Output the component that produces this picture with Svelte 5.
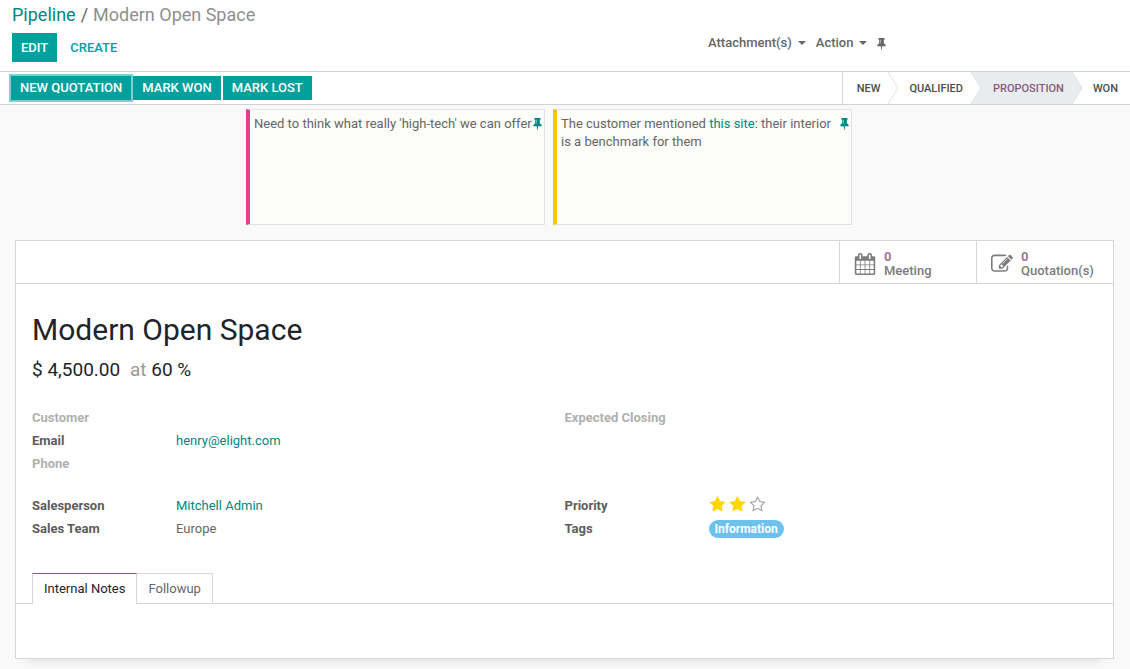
<script>
  const paths = {
    pin: 'M800 864v-448q0-14-9-23t-23-9-23 9-9 23v448q0 14 9 23t23 9 23-9 9-23zm672 352q0 26-19 45t-45 19h-429l-51 483q-2 12-10.5 20.5t-20.5 8.5h-1q-27 0-32-27l-76-485h-404q-26 0-45-19t-19-45q0-123 78.5-221.5t177.5-98.5v-512q-52 0-90-38t-38-90 38-90 90-38h640q52 0 90 38t38 90-38 90-90 38v512q99 0 177.5 98.5t78.5 221.5z',
    calendar: 'M192 1664h288v-288h-288v288zm352 0h320v-288h-320v288zm-352-352h288v-320h-288v320zm352 0h320v-320h-320v320zm-352-384h288v-288h-288v288zm736 736h320v-288h-320v288zm-384-736h320v-288h-320v288zm768 736h288v-288h-288v288zm-384-352h320v-320h-320v320zm-352-864v-288q0-13-9.5-22.5t-22.5-9.5h-64q-13 0-22.5 9.5t-9.5 22.5v288q0 13 9.5 22.5t22.5 9.5h64q13 0 22.5-9.5t9.5-22.5zm736 864h288v-320h-288v320zm-384-384h320v-288h-320v288zm384 0h288v-288h-288v288zm32-480v-288q0-13-9.5-22.5t-22.5-9.5h-64q-13 0-22.5 9.5t-9.5 22.5v288q0 13 9.5 22.5t22.5 9.5h64q13 0 22.5-9.5t9.5-22.5zm384-64v1280q0 52-38 90t-90 38h-1408q-52 0-90-38t-38-90v-1280q0-52 38-90t90-38h128v-96q0-66 47-113t113-47h64q66 0 113 47t47 113v96h384v-96q0-66 47-113t113-47h64q66 0 113 47t47 113v96h128q52 0 90 38t38 90z',
    edit: 'M888 1184l116-116-152-152-116 116v56h96v96h56zm440-720q-16-16-33 1l-350 350q-17 17-1 33t33-1l350-350q17-17 1-33zm80 594v190q0 119-84.5 203.5t-203.5 84.5h-832q-119 0-203.5-84.5t-84.5-203.5v-832q0-119 84.5-203.5t203.5-84.5h832q63 0 117 25 15 7 18 23 3 17-9 29l-49 49q-14 14-32 8-23-6-45-6h-832q-66 0-113 47t-47 113v832q0 66 47 113t113 47h832q66 0 113-47t47-113v-126q0-13 9-22l64-64q15-15 35-7t20 29zm-96-738l288 288-672 672h-288v-288zm444 132l-92 92-288-288 92-92q28-28 68-28t68 28l152 152q28 28 28 68t-28 68z',
    star: 'M1728 647q0 22-26 48l-363 354 86 500q1 7 1 20 0 21-10.5 35.5t-30.5 14.5q-19 0-40-12l-449-236-449 236q-22 12-40 12-21 0-31.5-14.5t-10.5-35.5q0-6 2-20l86-500-364-354q-25-27-25-48 0-37 56-46l502-73 225-455q19-41 49-41t49 41l225 455 502 73q56 9 56 46z',
    starEmpty: 'M1201 1004l306-297-422-62-189-382-189 382-422 62 306 297-73 421 378-199 377 199zm527-357q0 22-26 48l-363 354 86 500q1 7 1 20 0 50-41 50-19 0-40-12l-449-236-449 236q-22 12-40 12-21 0-31.5-14.5t-10.5-35.5q0-6 2-20l86-500-364-354q-25-27-25-48 0-37 56-46l502-73 225-455q19-41 49-41t49 41l225 455 502 73q56 9 56 46z'
  };
  const stages = ['New', 'Qualified', 'Proposition', 'Won'];
  let stage = $state('Proposition');
  let priority = $state(2);
  let tab = $state('Internal Notes');
</script>

{#snippet icon(name)}
  <svg class="icon" viewBox="0 0 1792 1792" aria-hidden="true"><path d={paths[name]} /></svg>
{/snippet}

{#snippet pin()}
  <svg class="icon tack" viewBox="320 0 1152 1792" aria-hidden="true"><path d={paths.pin} /></svg>
{/snippet}

<header class="panel">
  <nav class="crumbs" aria-label="Breadcrumb">
    <a href="#pipeline">Pipeline</a><span class="slash">/</span><span class="current">Modern Open Space</span>
  </nav>
  <div class="tools">
    <div class="left">
      <button class="btn primary">Edit</button>
      <button class="btn flat">Create</button>
    </div>
    <div class="right">
      <button class="drop">Attachment(s)<i class="caret"></i></button>
      <button class="drop">Action<i class="caret"></i></button>
      <button class="pin" aria-label="Pin">{@render pin()}</button>
    </div>
  </div>
</header>

<div class="statusbar">
  <div class="actions">
    <button class="btn primary focused">New Quotation</button>
    <button class="btn primary">Mark Won</button>
    <button class="btn primary">Mark Lost</button>
  </div>
  <div class="stages">
    {#each stages as s, i}
      <button class="stage" class:active={stage === s} onclick={() => (stage = s)}>{s}</button>
      {#if i < stages.length - 1}
        <svg
          class="sep"
          class:before={stages[i + 1] === stage}
          class:after={s === stage}
          viewBox="0 0 11 32"
          preserveAspectRatio="none"
          aria-hidden="true"
        >
          <path class="rest" d="M0 0H11V32H0L10 16Z" />
          <path class="lead" d="M0 0L10 16L0 32Z" />
          <path class="edge" d="M0 0L10 16L0 32" />
        </svg>
      {/if}
    {/each}
  </div>
</div>

<main>
  <section class="notes">
    <article class="note pink">
      <p>Need to think what really 'high-tech' we can offer</p>
      <button class="pin" aria-label="Unpin note">{@render pin()}</button>
    </article>
    <article class="note amber">
      <p>The customer mentioned <a href="#site">this site</a>: their interior is a benchmark for them</p>
      <button class="pin" aria-label="Unpin note">{@render pin()}</button>
    </article>
  </section>

  <section class="sheet">
    <div class="stats">
      <button class="stat">{@render icon('calendar')}<span><b>0</b>Meeting</span></button>
      <button class="stat">{@render icon('edit')}<span><b>0</b>Quotation(s)</span></button>
    </div>

    <div class="title">
      <h1>Modern Open Space</h1>
      <h2>$ 4,500.00 <span>at</span> 60 %</h2>
    </div>

    <div class="groups">
      <dl>
        <dt class="empty">Customer</dt><dd></dd>
        <dt>Email</dt><dd><a href="mailto:henry@elight.com">henry@elight.com</a></dd>
        <dt class="empty">Phone</dt><dd></dd>
      </dl>
      <dl>
        <dt class="empty">Expected Closing</dt><dd></dd>
      </dl>
      <dl>
        <dt>Salesperson</dt><dd><a href="#user">Mitchell Admin</a></dd>
        <dt>Sales Team</dt><dd>Europe</dd>
      </dl>
      <dl>
        <dt>Priority</dt>
        <dd class="stars">
          {#each [1, 2, 3] as n}
            <button class:on={n <= priority} aria-label="Priority {n}" onclick={() => (priority = n)}>
              {@render icon(n <= priority ? 'star' : 'starEmpty')}
            </button>
          {/each}
        </dd>
        <dt>Tags</dt><dd><span class="tag">Information</span></dd>
      </dl>
    </div>

    <div class="tabs" role="tablist">
      {#each ['Internal Notes', 'Followup'] as t}
        <button role="tab" aria-selected={tab === t} class:active={tab === t} onclick={() => (tab = t)}>{t}</button>
      {/each}
    </div>
    <div class="tabpane" role="tabpanel"></div>
  </section>
</main>

<style>
  :global(body) {
    margin: 0;
    background: #f9f9f9;
    color: #666;
    font: 13px/18px Roboto, "Noto Sans", sans-serif;
  }
  a {
    color: #008784;
    text-decoration: none;
  }
  button {
    font: inherit;
    color: inherit;
    border: 0;
    margin: 0;
    padding: 0;
    background: none;
    cursor: pointer;
  }
  .icon {
    display: block;
    width: 13px;
    height: 13px;
    fill: currentColor;
  }
  .tack {
    width: 9px;
  }

  .panel {
    background: #fff;
    border-bottom: 1px solid #ced4da;
    padding: 4px 12px 9px;
  }
  .crumbs {
    font-size: 18px;
    line-height: 22px;
  }
  .slash {
    padding: 0 5px;
  }
  .current {
    color: #8f8f8f;
  }
  .tools {
    display: flex;
    padding-top: 7px;
  }
  .left,
  .right {
    flex: 1;
    display: flex;
    align-items: flex-start;
  }
  .left {
    flex: 0 0 calc(50% + 143px);
    gap: 4px;
  }
  .btn {
    font-weight: 500;
    text-transform: uppercase;
    white-space: nowrap;
    padding: 0 9px;
    height: 29px;
  }
  .primary {
    background: #00a09d;
    color: #fff;
  }
  .flat {
    color: #00a09d;
  }
  .right {
    font-weight: 500;
  }
  .drop {
    display: flex;
    align-items: center;
    gap: 6px;
    height: 20px;
    margin-right: 10px;
  }
  .caret {
    border: 4px solid transparent;
    border-top-color: currentColor;
    border-bottom: 0;
  }
  .right .pin {
    height: 20px;
  }

  .statusbar {
    display: flex;
    justify-content: space-between;
    background: #fff;
    border-bottom: 1px solid #ced4da;
    height: 32px;
  }
  .actions {
    display: flex;
    align-items: center;
    gap: 2px;
    padding-left: 11px;
  }
  .actions .btn {
    height: 24px;
  }
  .focused {
    box-shadow: 0 0 0 2px #7fcfce;
  }
  .stages {
    display: flex;
    border-left: 1px solid #ced4da;
  }
  .stage {
    font-size: 11px;
    font-weight: 500;
    text-transform: uppercase;
    color: #4c4c4c;
    padding: 2px 12px 0 10px;
  }
  .stage:first-child {
    padding: 2px 8px 0 14px;
  }
  .stage.active {
    background: #e9ecef;
    color: #875a7b;
    padding: 2px 8px 0 11px;
  }
  .stage:nth-of-type(2) {
    padding-right: 8px;
  }
  .sep {
    width: 11px;
    height: 32px;
  }
  .sep path {
    fill: none;
  }
  .sep .edge {
    stroke: #dee2e6;
  }
  .sep.before .rest,
  .sep.after .lead {
    fill: #e9ecef;
  }

  main {
    padding: 4px 16px 10px 15px;
  }
  .notes {
    display: flex;
    justify-content: center;
    gap: 8px;
    padding-right: 31px;
    margin-bottom: 15px;
  }
  .note {
    box-sizing: border-box;
    width: 299px;
    min-height: 116px;
    display: flex;
    align-items: flex-start;
    justify-content: space-between;
    padding: 5px 2px 6px 4px;
    background: #fcfdf8;
    border: 1px solid #dee2e6;
    border-left-width: 4px;
  }
  .note p {
    margin: 0;
  }
  .note .pin {
    color: #008784;
    padding: 2px 0;
  }
  .pink {
    border-left-color: #e83e8c;
  }
  .amber {
    border-left-color: #ffc107;
  }

  .sheet {
    background: #fff;
    border: 1px solid #d3d8de;
    box-shadow: 0 12px 10px -12px rgba(0, 0, 0, 0.15);
  }
  .stats {
    display: flex;
    justify-content: flex-end;
    height: 42px;
    border-bottom: 1px solid #d3d8de;
  }
  .stat {
    box-sizing: border-box;
    width: 137px;
    display: flex;
    align-items: center;
    gap: 8px;
    padding: 3px 0 0 14px;
    border-left: 1px solid #d3d8de;
    font-weight: 500;
    line-height: 14px;
    text-align: left;
    color: #7c7c7c;
  }
  .stat .icon {
    width: 22px;
    height: 22px;
  }
  .stat b {
    display: block;
    font-weight: 700;
    color: #a0759a;
  }

  .title {
    padding: 27px 16px 0;
    color: #212529;
  }
  h1 {
    margin: 0;
    font-size: 30px;
    font-weight: 400;
    line-height: 38px;
  }
  h2 {
    margin: 9px 0 0;
    font-size: 19px;
    font-weight: 400;
    line-height: 24px;
  }
  h2 span {
    color: #999;
    padding-left: 5px;
  }

  .groups {
    display: grid;
    grid-template-columns: 1fr 1fr;
    row-gap: 19px;
    padding: 24px 16px 33px;
  }
  dl {
    margin: 0;
    display: grid;
    grid-template-columns: 144px 1fr;
    grid-auto-rows: 23px;
    align-content: start;
    align-items: center;
  }
  dt {
    font-weight: 700;
    color: #5c5c5c;
  }
  dt.empty {
    color: #b0b0b0;
  }
  dd {
    margin: 0;
  }
  .stars {
    display: flex;
    gap: 3px;
    color: #a8a8a8;
    padding-bottom: 3px;
  }
  .stars .icon {
    width: 17px;
    height: 17px;
  }
  .stars .on {
    color: gold;
  }
  .tag {
    display: block;
    width: max-content;
    padding: 0 6px;
    border-radius: 9px;
    background: #6cc1ed;
    color: #fff;
    font-size: 12px;
    font-weight: 700;
  }

  .tabs {
    display: flex;
    padding: 0 16px;
    border-bottom: 1px solid #d3d8de;
  }
  .tabs button {
    height: 30px;
    padding: 0 11px;
    border: 1px solid #d3d8de;
    border-width: 1px 1px 0 0;
  }
  .tabs .active {
    height: 31px;
    margin-bottom: -1px;
    border-left-width: 1px;
    border-top-color: #875a7b;
    background: #fff;
    color: #212529;
  }
  .tabpane {
    min-height: 54px;
  }
</style>
